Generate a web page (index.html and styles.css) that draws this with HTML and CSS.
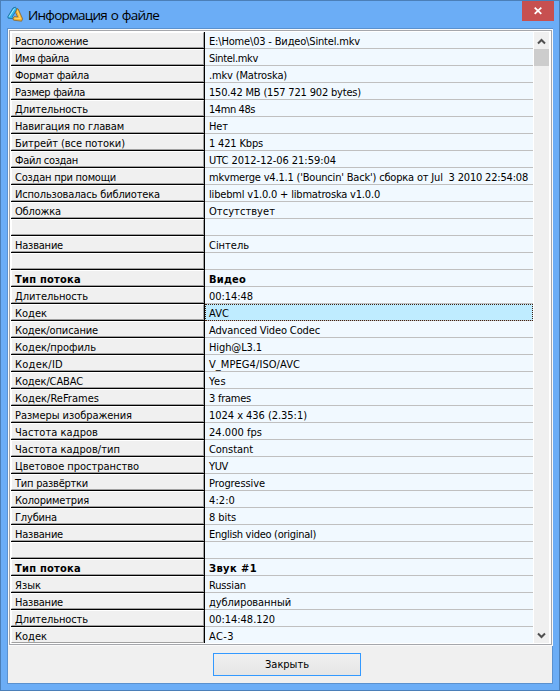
FILE: index.html
```html
<!DOCTYPE html>
<html lang="ru">
<head>
<meta charset="utf-8">
<title>Информация о файле</title>
<link rel="stylesheet" href="styles.css">
</head>
<body>
<div class="window">
  <header class="titlebar">
    <svg class="logo" width="17" height="17" viewBox="0 0 17 17">
      <path d="M8.3 1.2 L10.2 3 L5.5 10.5 L7 12.8 L1.2 12.2 L.8 10.8 L6 2 Z" fill="#2fb4ea" stroke="#1c6791" stroke-width=".8"/>
      <path d="M7.5 2.5 L2.2 10.7" stroke="#b5eeff" stroke-width="1"/>
      <path d="M10 2.6 L11.2 3 L15.6 12.8 L14.6 15.2 L6.6 14.2 L6 12.6 L7.2 10.6 L10.6 11 L8.6 6.4 Z" fill="#f7b52c" stroke="#7d653d" stroke-width=".8"/>
      <path d="M10.3 4.5 L13.4 12.5 L7.5 12.2" fill="none" stroke="#ffe08a" stroke-width=".8"/>
    </svg>
    <h1 class="title">Информация о файле</h1>
    <button class="close" aria-label="Закрыть окно"><svg width="8" height="8" viewBox="0 0 8 8"><path d="M.7 .7 L7.3 6.8 M7.3 .7 L.7 6.8" stroke="#fff" stroke-width="1.8"/></svg></button>
  </header>
  <main class="client">
    <div class="list">
      <div class="grid" id="grid"></div>
      <div class="scrollbar">
        <span class="arrow"><svg width="9" height="7" viewBox="0 0 9 7"><path d="M1 5.5 L4.5 2 L8 5.5" fill="none" stroke="#505050" stroke-width="2"/></svg></span>
        <span class="thumb"></span>
        <span class="arrow down"><svg width="9" height="7" viewBox="0 0 9 7"><path d="M1 1.5 L4.5 5 L8 1.5" fill="none" stroke="#505050" stroke-width="2"/></svg></span>
      </div>
    </div>
    <footer class="footer"><button class="ok"><span id="ok">Закрыть</span></button></footer>
  </main>
</div>
<script src="rows.js"></script>
</body>
</html>
```
FILE: rows.js
```js
// [label, label width, value, value width, row style]
const rows = [
  ['Расположение', 73, 'E:\\Home\\03 - Видео\\Sintel.mkv', 151],
  ['Имя файла', 54, 'Sintel.mkv', 49],
  ['Формат файла', 74, '.mkv (Matroska)', 78],
  ['Размер файла', 70, '150.42 MB (157 721 902 bytes)', 152],
  ['Длительность', 73, '14mn 48s', 46],
  ['Навигация по главам', 109, 'Нет', 19],
  ['Битрейт (все потоки)', 110, '1 421 Kbps', 54],
  ['Файл создан', 63, 'UTC 2012-12-06 21:59:04', 127],
  ['Создан при помощи', 101, "mkvmerge v4.1.1 ('Bouncin' Back') сборка от Jul  3 2010 22:54:08", 319],
  ['Использовалась библиотека', 145, 'libebml v1.0.0 + libmatroska v1.0.0', 171],
  ['Обложка', 46, 'Отсутствует', 66],
  ['', 0, '', 0],
  ['Название', 48, 'Сінтель', 40],
  ['', 0, '', 0],
  ['Тип потока', 66, 'Видео', 37, 'bold'],
  ['Длительность', 73, '00:14:48', 44],
  ['Кодек', 32, 'AVC', 20, 'selected'],
  ['Кодек/описание', 83, 'Advanced Video Codec', 111],
  ['Кодек/профиль', 81, 'High@L3.1', 53],
  ['Кодек/ID', 48, 'V_MPEG4/ISO/AVC', 91],
  ['Кодек/CABAC', 68, 'Yes', 17],
  ['Кодек/ReFrames', 84, '3 frames', 42],
  ['Размеры изображения', 117, '1024 x 436 (2.35:1)', 98],
  ['Частота кадров', 83, '24.000 fps', 53],
  ['Частота кадров/тип', 105, 'Constant', 44],
  ['Цветовое пространство', 124, 'YUV', 19],
  ['Тип развёртки', 73, 'Progressive', 56],
  ['Колориметрия', 74, '4:2:0', 26],
  ['Глубина', 42, '8 bits', 27],
  ['Название', 48, 'English video (original)', 107],
  ['', 0, '', 0],
  ['Тип потока', 66, 'Звук #1', 48, 'bold'],
  ['Язык', 26, 'Russian', 37],
  ['Название', 48, 'дублированный', 82],
  ['Длительность', 73, '00:14:48.120', 66],
  ['Кодек', 32, 'AC-3', 25]
];

// Tighten or loosen tracking until the text takes the given width.
function fit(el, width) {
  if (!width) return;
  const natural = el.getBoundingClientRect().width;
  el.style.letterSpacing = (width - natural) / el.textContent.length + 'px';
}

const grid = document.getElementById('grid');
for (const [label, lw, value, vw, kind] of rows) {
  const row = document.createElement('div');
  row.className = 'row ' + (kind || '');
  grid.append(row);
  for (const [cls, text, width] of [['label', label, lw], ['value', value, vw]]) {
    const cell = document.createElement('div');
    const span = document.createElement('span');
    cell.className = cls;
    span.textContent = text;
    cell.append(span);
    row.append(cell);
    fit(span, width);
  }
}
fit(document.getElementById('ok'), 44);
fit(document.querySelector('.title'), 131);
```
FILE: styles.css
```css
* { box-sizing: border-box; }
body { margin: 0; overflow: hidden; font: 11px/15px "DejaVu Sans Condensed", "DejaVu Sans", sans-serif; font-stretch: condensed; color: #000; }
.window { width: 560px; height: 691px; background: #6badf6; border: 1px solid #4b7fb8; padding: 0 6px 6px; display: flex; flex-direction: column; }
.titlebar { height: 27px; display: flex; align-items: flex-start; }
.logo { margin: 5px 0 0; }
.title { margin: 4px 0 0 4px; font: 13.5px/20px "Open Sans", "Noto Sans", sans-serif; white-space: nowrap; word-spacing: 1px; }
.close { margin: 0 -1px 0 auto; width: 32px; height: 20px; padding: 0; border: 0; background: #c75050; display: flex; align-items: center; justify-content: center; }
.client { flex: 1; border: 1px solid #5a91cf; background: #f0f0f0; display: flex; flex-direction: column; }
.list { height: 615px; margin: 1px 0 0 1px; width: 543px; border: 1px solid #a5a7ac; background: #fff; padding: 1px; display: flex; box-shadow: 0 0 0 1px #fafafa; }
.grid { width: 522px; height: 611px; overflow: hidden; }
.row { display: flex; height: 17px; }
.label { width: 193px; height: 16px; background: #f0f0f0; border: 1px solid #fff; border-right-color: #a0a0a0; border-bottom-color: #a0a0a0; padding-left: 3px; white-space: pre; line-height: 18px; box-shadow: 0 1px #000, 1px 0 #000, 1px 1px #000; }
.value { width: 328px; margin-left: 1px; height: 17px; background: #f1f9ff; border-bottom: 1px solid #c0c0c0; padding: 1px 0 0 4px; white-space: pre; line-height: 18px; }
.label span, .value span { display: inline-block; height: 14px; }
.row:last-child .label { box-shadow: 1px 0 #000; }
.row:last-child .value { border-bottom: 0; }
.bold { font-weight: bold; }
.selected .value { background: #bfecff; outline: 1px dotted #402010; outline-offset: -1px; }
.scrollbar { width: 15px; margin-left: 1px; background: #f0f0f0; display: flex; flex-direction: column; }
.arrow { height: 17px; padding-top: 2px; display: flex; align-items: center; justify-content: center; }
.thumb { height: 17px; background: #cdcdcd; }
.down { margin-top: auto; }
.footer { flex: 1; display: flex; justify-content: center; align-items: flex-start; padding: 8px 0 0 14px; }
.ok { width: 148px; height: 23px; padding: 0; border: 1px solid #3399ff; background: linear-gradient(#f0f0f0, #e5e5e5); font: inherit; color: #000; }
#ok, .title { display: inline-block; white-space: nowrap; }
```
